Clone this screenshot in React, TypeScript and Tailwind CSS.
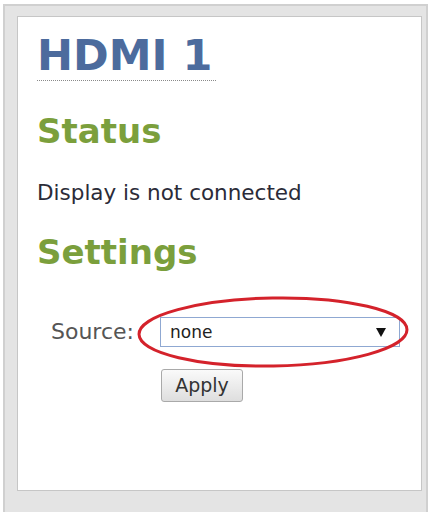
import React from "react";

export default function App() {
  return (
    <div
      className="w-[434px] h-[512px] bg-white pt-[4px] pl-[3px] pr-[6px] overflow-hidden"
      style={{ fontFamily: '"DejaVu Sans", Verdana, sans-serif' }}
    >
      <div className="h-[508px] bg-[#e4e4e4] border-l-2 border-t-2 border-r-2 border-[#d0d0d0] pt-[10px] pl-[12px] pr-[4px]">
        <div className="h-[475px] bg-white border border-[#c6c6c6] pl-[19px] pt-[17px] flex flex-col items-start">
          <h1 className="text-[43px] leading-[43px] font-bold text-[#4c6b9d] pr-[4px] pb-[3px] border-b border-dotted border-[#8a8a8a]">
            HDMI 1
          </h1>
          <h2 className="mt-[33px] text-[34px] leading-[34px] font-bold text-[#7b9f3c]">
            Status
          </h2>
          <p className="mt-[34px] text-[21.5px] leading-[22px] text-[#2b2b38]">
            Display is not connected
          </p>
          <h2 className="mt-[31px] text-[34px] leading-[34px] font-bold text-[#7b9f3c]">
            Settings
          </h2>
          <div className="relative mt-[48px] flex items-center">
            <span className="ml-[14px] w-[109px] text-[22px] leading-[22px] text-[#555555]">
              Source:
            </span>
            <div className="w-[240px] h-[30px] border border-[#8fa8d2] bg-white flex items-center justify-between pl-[9px] pr-[13px]">
              <span className="text-[17px] leading-[17px] text-[#222]">none</span>
              <svg width="10" height="10" viewBox="0 0 10 10">
                <path d="M0 1 L10 1 L5 10 Z" fill="#111" />
              </svg>
            </div>
            <svg
              className="absolute left-[99px] top-[-22px]"
              width="274"
              height="74"
              viewBox="0 0 274 74"
            >
              <ellipse
                cx="137"
                cy="37"
                rx="134"
                ry="34"
                fill="none"
                stroke="#d4222b"
                strokeWidth="3"
                transform="rotate(-1 137 37)"
              />
            </svg>
          </div>
          <button className="mt-[22px] ml-[124px] w-[82px] h-[33px] rounded-[3px] border border-[#a9a9a9] bg-gradient-to-b from-[#fafafa] to-[#dedede] text-[19px] leading-[19px] text-[#333] flex items-center justify-center">
            Apply
          </button>
        </div>
      </div>
    </div>
  );
}
